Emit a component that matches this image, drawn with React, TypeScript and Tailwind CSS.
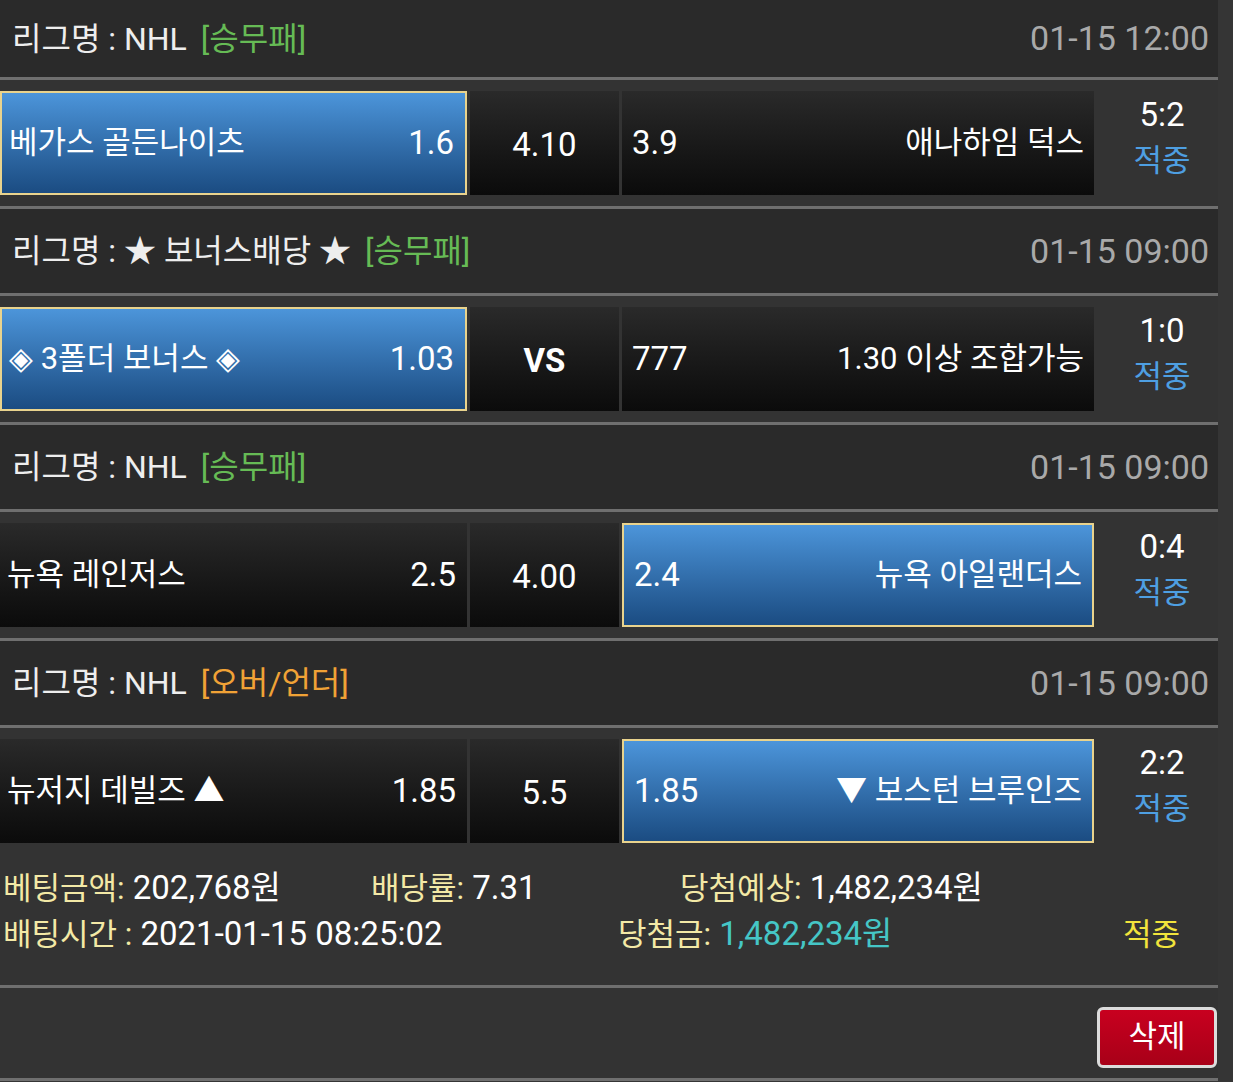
import React from "react";

type Match = {
  league: string;
  type: string;
  typeColor: string;
  date: string;
  home: string;
  homeOdd: string;
  draw: string;
  drawBold?: boolean;
  awayOdd: string;
  away: string;
  sel: "home" | "away";
  score: string;
};

const matches: Match[] = [
  {
    league: "리그명 : NHL",
    type: "[승무패]",
    typeColor: "text-[#66bb55]",
    date: "01-15 12:00",
    home: "베가스 골든나이츠",
    homeOdd: "1.6",
    draw: "4.10",
    awayOdd: "3.9",
    away: "애나하임 덕스",
    sel: "home",
    score: "5:2",
  },
  {
    league: "리그명 : ★ 보너스배당 ★",
    type: "[승무패]",
    typeColor: "text-[#66bb55]",
    date: "01-15 09:00",
    home: "◈ 3폴더 보너스 ◈",
    homeOdd: "1.03",
    draw: "VS",
    drawBold: true,
    awayOdd: "777",
    away: "1.30 이상 조합가능",
    sel: "home",
    score: "1:0",
  },
  {
    league: "리그명 : NHL",
    type: "[승무패]",
    typeColor: "text-[#66bb55]",
    date: "01-15 09:00",
    home: "뉴욕 레인저스",
    homeOdd: "2.5",
    draw: "4.00",
    awayOdd: "2.4",
    away: "뉴욕 아일랜더스",
    sel: "away",
    score: "0:4",
  },
  {
    league: "리그명 : NHL",
    type: "[오버/언더]",
    typeColor: "text-[#f0a236]",
    date: "01-15 09:00",
    home: "뉴저지 데빌즈 ▲",
    homeOdd: "1.85",
    draw: "5.5",
    awayOdd: "1.85",
    away: "▼ 보스턴 브루인즈",
    sel: "away",
    score: "2:2",
  },
];

const Line = () => <div className="h-[3px] bg-[#6f6f6f]" />;

const cellBase = "h-[104px] flex items-center justify-between";
const dark = "bg-linear-to-b from-[#2a2a2a] to-[#0b0b0b]";
const blue =
  "bg-linear-to-b from-[#4c95da] to-[#1b4c82] border-2 border-[#e9d38d]";

function Block({ m, first, last }: { m: Match; first: boolean; last: boolean }) {
  return (
    <>
      <div
        className={`${first ? "h-[77px]" : "h-[84px]"} bg-[#2a2a2a] flex items-center justify-between pl-[12px] pr-[9px]`}
      >
        <div className="flex items-center text-[32px]">
          <span className="text-[#eeeeee]">{m.league}</span>
          <span className={`${m.typeColor} ml-[14px]`}>{m.type}</span>
        </div>
        <span className="text-[#a9a9a9] text-[34px]">{m.date}</span>
      </div>
      <Line />
      <div className="h-[126px] bg-[#333333] flex items-center text-white">
        <div
          className={`${cellBase} w-[467px] pl-[7px] pr-[11px] ${m.sel === "home" ? blue : dark}`}
        >
          <span className="text-[31px]">{m.home}</span>
          <span className="text-[33px]">{m.homeOdd}</span>
        </div>
        <div
          className={`${cellBase} w-[149px] ml-[3px] justify-center ${dark} ${m.drawBold ? "font-bold" : ""}`}
        >
          <span className="pt-[4px] text-[33px]">{m.draw}</span>
        </div>
        <div
          className={`${cellBase} w-[472px] ml-[3px] pl-[10px] pr-[10px] ${m.sel === "away" ? blue : dark}`}
        >
          <span className="text-[33px]">{m.awayOdd}</span>
          <span className="text-[31px]">{m.away}</span>
        </div>
        <div className="flex-1 flex flex-col items-center justify-center leading-[46px] pb-[10px] pl-[12px]">
          <span className="text-white text-[33px]">{m.score}</span>
          <span className="text-[#4e9fe2] text-[31px]">적중</span>
        </div>
      </div>
      {!last && <Line />}
    </>
  );
}

const L = ({ children }: { children: React.ReactNode }) => (
  <span className="text-[#f3e9a6] text-[31px]">{children}</span>
);

export default function App() {
  return (
    <div className="w-[1233px] h-[1082px] bg-[#353535] overflow-hidden font-[Roboto,'Noto_Sans_CJK_KR',sans-serif]">
      <div className="w-[1218px]">
        {matches.map((m, i) => (
          <Block key={i} m={m} first={i === 0} last={i === matches.length - 1} />
        ))}
        <div className="h-[131px] bg-[#333333] flex flex-col justify-center gap-[2px] leading-[38px] pl-[3px] pb-[12px]">
          <div className="flex items-baseline">
            <div className="w-[368px]">
              <L>베팅금액:</L>
              <span className="text-white text-[33px]"> 202,768원</span>
            </div>
            <div className="w-[309px]">
              <L>배당률:</L>
              <span className="text-white text-[33px]"> 7.31</span>
            </div>
            <div>
              <L>당첨예상:</L>
              <span className="text-white text-[33px]"> 1,482,234원</span>
            </div>
          </div>
          <div className="flex items-baseline">
            <div className="w-[615px]">
              <L>배팅시간 :</L>
              <span className="text-white text-[33px]"> 2021-01-15 08:25:02</span>
            </div>
            <div className="w-[505px]">
              <L>당첨금:</L>
              <span className="text-[#45c6c6] text-[33px]"> 1,482,234원</span>
            </div>
            <div className="text-[#f2e43c] text-[31px]">적중</div>
          </div>
        </div>
        <Line />
        <div className="h-[90px] bg-[#333333] flex items-center justify-end pr-[1px] pt-[8px]">
          <button className="w-[120px] h-[61px] rounded-[6px] border-[3px] border-[#dcdcdc] bg-linear-to-b from-[#c8001f] to-[#a80018] text-white text-[31px] flex items-center justify-center">
            삭제
          </button>
        </div>
        <Line />
      </div>
    </div>
  );
}
